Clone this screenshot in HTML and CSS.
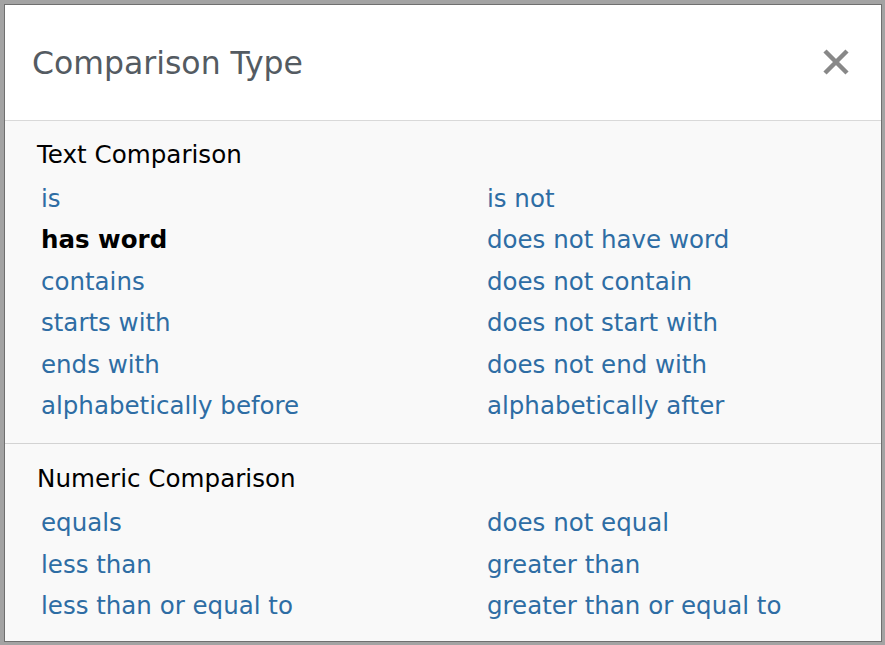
FILE: index.html
```html
<!DOCTYPE html>
<html lang="en">
  <head>
    <meta charset="UTF-8" />
    <title>Comparison Type</title>
    <link rel="stylesheet" href="styles.css">
  </head>
  <body>
    <div class="modal">
      <header class="modal-header">
        <h1>Comparison Type</h1>
        <button class="close" aria-label="Close">
          <svg width="28" height="28" viewBox="0 0 28 28">
            <path d="M3 3 L25 25 M25 3 L3 25" stroke="#888" stroke-width="4.5" stroke-linecap="butt" />
          </svg>
        </button>
      </header>
      <div class="modal-body">
        <section class="group">
          <h2>Text Comparison</h2>
          <ul class="options">
            <li><a href="#">is</a></li>
            <li><a href="#">is not</a></li>
            <li><b>has word</b></li>
            <li><a href="#">does not have word</a></li>
            <li><a href="#">contains</a></li>
            <li><a href="#">does not contain</a></li>
            <li><a href="#">starts with</a></li>
            <li><a href="#">does not start with</a></li>
            <li><a href="#">ends with</a></li>
            <li><a href="#">does not end with</a></li>
            <li><a href="#">alphabetically before</a></li>
            <li><a href="#">alphabetically after</a></li>
          </ul>
        </section>
        <section class="group">
          <h2>Numeric Comparison</h2>
          <ul class="options">
            <li><a href="#">equals</a></li>
            <li><a href="#">does not equal</a></li>
            <li><a href="#">less than</a></li>
            <li><a href="#">greater than</a></li>
            <li><a href="#">less than or equal to</a></li>
            <li><a href="#">greater than or equal to</a></li>
          </ul>
        </section>
      </div>
    </div>
  </body>
</html>
```

FILE: styles.css
```css
html,
body {
  height: 100%;
}
body {
  margin: 0;
  padding: 4px 3px 3px 4px;
  box-sizing: border-box;
  background-color: #a3a3a3;
  font-family: "DejaVu Sans", Verdana, sans-serif;
}
.modal {
  height: 100%;
  box-sizing: border-box;
  background-color: #f9f9f9;
  border: 1px solid #6f6f6f;
}
.modal-header {
  display: flex;
  align-items: center;
  justify-content: space-between;
  height: 115px;
  padding: 0 31px 0 27px;
  background-color: #fff;
  border-bottom: 1px solid #d9d9d9;
}
.modal-header h1 {
  margin: 0;
  font-size: 31.5px;
  font-weight: normal;
  color: #545b62;
}
.close {
  display: flex;
  margin-top: -2px;
  padding: 0;
  border: none;
  background: none;
}
.group {
  padding: 19px 0 17px 32px;
}
.group + .group {
  padding-top: 20px;
  border-top: 1px solid #d3d3d3;
}
.group h2 {
  margin: 0 0 8px 0;
  font-size: 24.6px;
  font-weight: normal;
  color: #000;
  line-height: 30px;
}
.options {
  display: grid;
  grid-template-columns: 446px 1fr;
  margin: 0;
  padding: 0 0 0 4px;
  list-style: none;
}
.options li {
  font-size: 24.5px;
  line-height: 41.4px;
}
.options a {
  color: #2e6da4;
  text-decoration: none;
}
.options b {
  color: #000;
}
```
